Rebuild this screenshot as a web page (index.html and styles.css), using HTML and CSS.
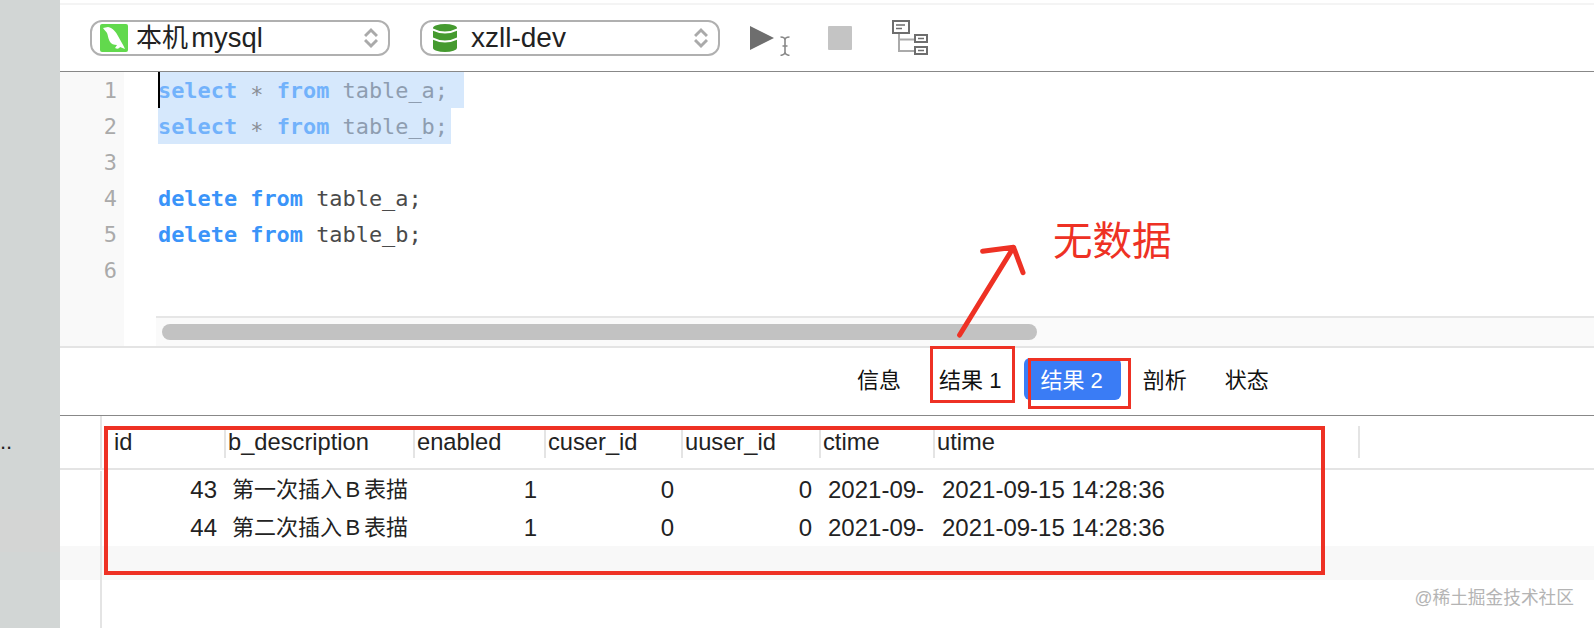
FILE: index.html
```html
<!DOCTYPE html>
<html lang="zh">
<head>
<meta charset="utf-8">
<title>Query</title>
<link rel="stylesheet" href="styles.css">
</head>
<body>
<div class="page">
  <aside class="sidebar">
    <div class="side-dots">..</div>
    <div class="side-band"></div>
  </aside>
  <main class="main">
    <div class="topline"></div>
    <div class="toolbar">
      <div class="select select-conn">
        <svg class="ico" width="28" height="28" viewBox="0 0 28 28"><rect width="28" height="28" rx="2" fill="#62d94d"/><path d="M3 4 L8 3 C13 4 16 8 18 12 C20 16 23 20 25 25 L20 23 C19 25 17 25 15 24 L17 21 C14 21 11 20 9.5 17 C8 14 8 11 7 9 C6 7 4 6 3 4Z" fill="#fff"/></svg>
        <span class="select-text">本机 <span class="latin">mysql</span></span>
        <svg class="chev" width="14" height="22" viewBox="0 0 14 22"><path d="M1 9 7 3 13 9M1 13 7 19 13 13" fill="none" stroke="#aaa" stroke-width="3"/></svg>
      </div>
      <div class="select select-db">
        <svg class="ico" width="24" height="28" viewBox="0 0 24 28"><path d="M0 4a12 4 0 0 1 24 0v20a12 4 0 0 1-24 0z" fill="#459a2f"/><path d="M-1 5q13 7 26 0M-1 14q13 7 26 0" fill="none" stroke="#fff" stroke-width="2"/></svg>
        <span class="select-text">xzll-dev</span>
        <svg class="chev" width="14" height="22" viewBox="0 0 14 22"><path d="M1 9 7 3 13 9M1 13 7 19 13 13" fill="none" stroke="#aaa" stroke-width="3"/></svg>
      </div>
      <svg class="tool-play" width="40" height="30" viewBox="0 0 40 30"><path d="M0 0 24 12 0 24z" fill="#6e6e6e"/><path d="M30.5 11C33 11 35 12 35 14V26C35 28 33 29 30.5 29.5M39.5 11C37 11 35 12 35 14M39.5 29.5C37 29 35 28 35 26M32.5 20H37.5" fill="none" stroke="#888" stroke-width="1.6"/></svg>
      <div class="tool-stop"></div>
      <svg class="tool-tree" width="36" height="35" viewBox="0 0 36 35"><path d="M7 14V31H22M7 19.5H22" fill="none" stroke="#aaa" stroke-width="2"/><g fill="#fff" stroke="#6e6e6e" stroke-width="2"><rect x="1" y="1" width="16" height="12"/><rect x="23" y="15" width="12" height="7"/><rect x="23" y="27" width="12" height="7"/></g><path d="M4 5H13M4 8.5H10M26 18.5H32M26 30.5H32" fill="none" stroke="#6e6e6e" stroke-width="1.6"/></svg>
    </div>

    <section class="editor">
      <div class="gutter">
        <div>1</div><div>2</div><div>3</div><div>4</div><div>5</div><div>6</div>
      </div>
      <div class="code-area">
        <div class="code">
          <div class="line"><span class="sel sel-first"><b>select</b> <i>∗</i> <b>from</b> table_a;</span></div>
          <div class="line"><span class="sel sel-second"><b>select</b> <i>∗</i> <b>from</b> table_b;</span></div>
          <div class="line"></div>
          <div class="line"><b>delete</b> <b>from</b> table_a;</div>
          <div class="line"><b>delete</b> <b>from</b> table_b;</div>
          <div class="line"></div>
        </div>
        <div class="hscroll"><div class="thumb"></div></div>
      </div>
    </section>

    <nav class="tabs">
      <div class="tab">信息</div>
      <div class="tab">结果 1</div>
      <div class="tab tab-active">结果 2</div>
      <div class="tab">剖析</div>
      <div class="tab">状态</div>
    </nav>

    <section class="table">
      <div class="row row-head">
        <div class="row-gutter"></div>
        <div class="th th-first">id</div>
        <div class="th">b_description</div>
        <div class="th">enabled</div>
        <div class="th">cuser_id</div>
        <div class="th">uuser_id</div>
        <div class="th">ctime</div>
        <div class="th">utime</div>
        <div class="th"></div>
      </div>
      <div class="rows">
        <div class="row row-data">
          <div class="row-gutter"></div>
          <div class="td num">43</div>
          <div class="td txt cjk">第一次插入 B 表描</div>
          <div class="td num">1</div>
          <div class="td num">0</div>
          <div class="td num">0</div>
          <div class="td txt date">2021-09-</div>
          <div class="td txt date">2021-09-15 14:28:36</div>
        </div>
        <div class="row row-data">
          <div class="row-gutter"></div>
          <div class="td num">44</div>
          <div class="td txt cjk">第二次插入 B 表描</div>
          <div class="td num">1</div>
          <div class="td num">0</div>
          <div class="td num">0</div>
          <div class="td txt date">2021-09-</div>
          <div class="td txt date">2021-09-15 14:28:36</div>
        </div>
      </div>
      <div class="row row-band"><div class="row-gutter"></div></div>
      <div class="row row-tail"><div class="row-gutter"></div></div>
    </section>
  </main>

  <div class="mark mark-tab1"></div>
  <div class="mark mark-tab2"></div>
  <div class="mark mark-table"></div>
  <svg class="arrow" width="80" height="100" viewBox="0 0 80 100"><path d="M9.6 95 63.6 7.3M32.6 11.3 63.6 7.3 73 32.7" fill="none" stroke="#ee3124" stroke-width="5" stroke-linecap="round" stroke-linejoin="round"/></svg>
  <div class="note">无数据</div>
  <div class="watermark">@稀土掘金技术社区</div>
</div>
</body>
</html>
```

FILE: styles.css
```css
* { box-sizing: border-box; }
html, body { margin: 0; padding: 0; background: #fff; }
.page {
  position: relative;
  display: flex;
  width: 1594px;
  height: 628px;
  overflow: hidden;
  font-family: "Liberation Sans", "Noto Sans CJK SC", sans-serif;
  color: #222;
}

/* sidebar */
.sidebar { width: 60px; flex: none; background: #d2d6d5; display: flex; flex-direction: column; }
.side-dots { margin-top: 426px; height: 32px; font-size: 22px; line-height: 32px; color: #222; }
.side-band { margin-top: 52px; height: 42px; background: #d4d5d4; }

.main { flex: 1; min-width: 0; display: flex; flex-direction: column; }
.topline { margin-top: 3px; height: 2px; background: #f4f4f4; flex: none; }

/* toolbar */
.toolbar {
  flex: none;
  height: 67px;
  padding: 15px 0 0 30px;
  display: flex;
  align-items: flex-start;
  border-bottom: 1px solid #888;
}
.select {
  height: 36px;
  border: 2px solid #b0b0b0;
  border-radius: 12px;
  display: flex;
  align-items: center;
  padding-right: 10px;
}
.select-conn { width: 300px; padding-left: 8px; gap: 8px; font-size: 26px; word-spacing: -4px; }
.select-db { width: 300px; margin-left: 30px; padding-left: 11px; gap: 14px; font-size: 28px; }
.select-text { line-height: 36px; white-space: nowrap; color: #222; }
.latin { font-size: 27.4px; }
.chev { margin-left: auto; flex: none; }
.ico { flex: none; }
.tool-play { margin: 6px 0 0 30px; flex: none; }
.tool-stop { width: 24px; height: 24px; margin: 6px 0 0 38px; background: #c4c4c4; border-radius: 1px; flex: none; }
.tool-tree { margin: 0 0 0 40px; flex: none; }

/* editor */
.editor {
  flex: none;
  height: 276px;
  display: flex;
  border-bottom: 2px solid #e4e4e4;
  font-family: "DejaVu Sans Mono", monospace;
  font-size: 21.9px;
}
.gutter {
  width: 64px;
  flex: none;
  padding-right: 7px;
  background: #f9f9f9;
  text-align: right;
  color: #aaa;
  line-height: 38px;
}
.gutter div { height: 36px; }
.code-area { flex: 1; min-width: 0; display: flex; flex-direction: column; }
.code { flex: 1; padding-left: 34px; line-height: 38px; color: #4a4a4a; }
.line { height: 36px; white-space: pre; }
.line b { color: #3a94f9; font-weight: 700; }
.sel { position: relative; display: inline-block; height: 36px; vertical-align: top; background: #d6e8fc; color: #8e9db0; }
.line .sel b { color: #72b2fb; }
.sel i { font-style: normal; color: #8a8f96; }
.sel-first { padding-right: 16px; }
.sel-second { padding-right: 3px; }
.sel-first::before { content: ""; position: absolute; left: 0; top: 0; width: 2px; height: 36px; background: #000; }
.hscroll {
  flex: none;
  height: 30px;
  margin-left: 32px;
  padding: 6px 0 0 6px;
  background: #fafafa;
  border-top: 2px solid #e6e6e6;
}
.thumb { width: 875px; height: 16px; border-radius: 8px; background: #c2c2c2; }

/* tabs */
.tabs {
  flex: none;
  height: 68px;
  padding: 10px 0 0 781px;
  display: flex;
  align-items: flex-start;
  gap: 6px;
  border-bottom: 1px solid #888;
}
.tab {
  height: 42px;
  padding: 0 16px;
  border-radius: 6px;
  font-size: 22px;
  line-height: 46px;
  color: #111;
  white-space: nowrap;
}
.tab-active { margin-left: 1px; padding-right: 18px; background: #3a7cf5; color: #fff; }

/* result table */
.table { flex: 1; min-height: 0; display: flex; flex-direction: column; font-size: 23.7px; }
.row {
  display: grid;
  grid-template-columns: 42px 122px 189px 131px 137px 138px 114px 425px 1fr;
}
.row-gutter { border-right: 2px solid #e4e4e4; }
.row-head { flex: none; border-bottom: 2px solid #e4e4e4; }
.th {
  height: 32px;
  margin: 10px 0;
  padding-left: 2px;
  border-left: 2px solid #e4e4e4;
  line-height: 32px;
  white-space: nowrap;
}
.th-first { border-left: 0; padding-left: 12px; }
.rows { flex: none; padding-top: 1px; }
.row-data { height: 38px; }
.td { font-size: 24px; line-height: 38px; white-space: nowrap; }
.num { text-align: right; padding-right: 7px; }
.txt { padding-left: 8px; }
.date { padding-left: 9px; }
.cjk { font-size: 22px; word-spacing: -2.5px; }
.row-band { flex: none; height: 34px; margin-top: -1px; background: #f8f8f8; }
.row-tail { flex: 1; }

/* annotations drawn over the screenshot */
.mark { position: absolute; border: 3px solid #ee3124; }
.mark-tab1 { left: 930px; top: 346px; width: 85px; height: 57px; }
.mark-tab2 { left: 1028px; top: 358px; width: 103px; height: 51px; }
.mark-table { left: 104px; top: 426px; width: 1221px; height: 149px; border-width: 4px; }
.arrow { position: absolute; left: 950px; top: 240px; }
.note {
  position: absolute;
  left: 1053px;
  top: 215px;
  font-size: 39.5px;
  line-height: 52px;
  color: #ee3124;
}
.watermark {
  position: absolute;
  right: 20px;
  top: 586px;
  font-size: 17.7px;
  line-height: 24px;
  color: #b4b4b4;
}
```
